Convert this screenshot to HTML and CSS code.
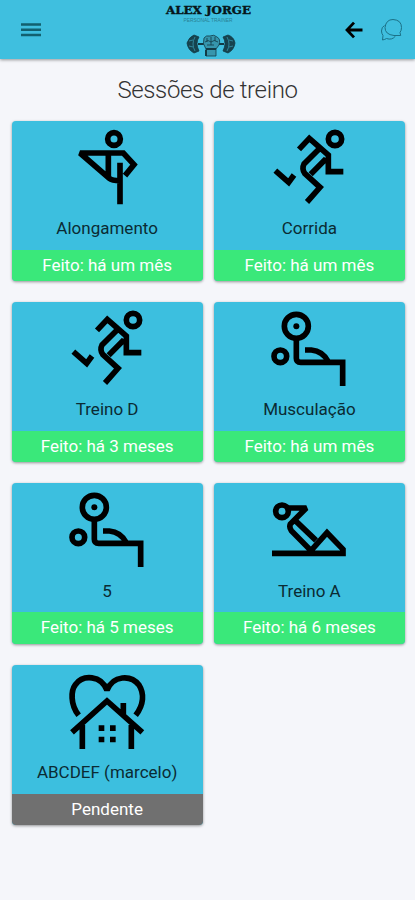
FILE: index.html
```
<!DOCTYPE html>
<html lang="pt-BR">
<head>
    <meta charset="UTF-8">
    <meta name="viewport" content="width=device-width, initial-scale=1.0">
    <title>Sessões de treino</title>
    <link rel="stylesheet" href="styles.css">
</head>
<body>
    <!-- icons used more than once -->
    <svg class="defs" width="0" height="0">
        <symbol id="run" viewBox="-3 3 300 285">
            <circle cx="225" cy="57" r="20"/>
            <path d="M117 88L148 55L205 105V155H250M178 86L132 132Q125 146 134 160L180 202L141 246M198 116L152 163M46 152L86 187L102 165"/>
        </symbol>
        <symbol id="bench" viewBox="-3 -7 300 285">
            <circle cx="109" cy="66" r="36"/>
            <circle class="solid" cx="109" cy="66" r="9"/>
            <circle cx="61" cy="156" r="19"/>
            <path d="M109 102V162Q109 174 122 174H248V245M135 137H154Q188 140 204 171"/>
        </symbol>
    </svg>

    <header>
        <svg class="menu" width="20" height="16" viewBox="0 0 20 16">
            <path d="M0 2.500H20M0 7.700H20M0 13H20"/>
        </svg>
        <svg class="logo" width="92" height="58" viewBox="0 0 92 58">
            <text class="brand" x="4" y="12.500" textLength="85" lengthAdjust="spacingAndGlyphs">ALEX JORGE</text>
            <text class="tagline" x="21.500" y="20.500" textLength="49" lengthAdjust="spacingAndGlyphs">PERSONAL TRAINER</text>
            <g class="dumbbell">
                <path class="plate" d="M32 34Q27 36 25 42Q26 49 32 52L37 50Q33 42 37 36ZM66 34Q72 36 73 42Q72 49 66 52L61 50Q65 42 61 36Z"/>
                <path class="shine" d="M33 36Q29 43 33 50M65 36Q69 43 65 50M27 40L31 39M27 45L31 46M71 40L67 39M71 45L67 46"/>
                <path class="bar" d="M36 43H42M57 43H62"/>
                <path class="hand" d="M42 37Q44 34 48 35Q52 33 55 36Q59 38 57 44L54 48V55H44V48Q40 43 42 37Z"/>
                <path d="M43 41Q46 38 49 41Q52 38 56 41M45 37V41M49 36V44M53 36V40M45 44H52"/>
                <path class="bar" d="M44 49V55M44 48H54"/>
            </g>
        </svg>
        <div class="actions">
            <svg class="back" width="18" height="18" viewBox="0 0 18 18">
                <path d="M9 1.600L2 9L9 16.400M2.500 9H17.500"/>
            </svg>
            <svg class="chat" width="23" height="24" viewBox="0 0 23 24">
                <path d="M20.700 17.500H14Q5 16.500 5 9.500Q6 1.500 13 1.500Q21.500 2 21.500 9.500Q21.500 12.500 20 14.500Z"/>
                <path d="M4.500 7.500Q1.500 9 1.500 13Q1.500 15.500 3 17.500L2.500 22Q5 21.500 6.500 20.500Q12 22.500 15.500 18"/>
            </svg>
        </div>
    </header>

    <h1>Sessões de treino</h1>

    <main class="grid">
        <div class="card">
            <svg class="icon" viewBox="-9 3 300 285">
                <circle cx="162" cy="57" r="19"/>
                <path d="M180 253V128M195 167L222 134L190 99H60L148 175Q156 182 180 182M145 100V170"/>
            </svg>
            <div class="name">Alongamento</div>
            <div class="status">Feito: há um mês</div>
        </div>
        <div class="card">
            <svg class="icon"><use href="#run"/></svg>
            <div class="name">Corrida</div>
            <div class="status">Feito: há um mês</div>
        </div>
        <div class="card">
            <svg class="icon"><use href="#run"/></svg>
            <div class="name">Treino D</div>
            <div class="status">Feito: há 3 meses</div>
        </div>
        <div class="card">
            <svg class="icon"><use href="#bench"/></svg>
            <div class="name">Musculação</div>
            <div class="status">Feito: há um mês</div>
        </div>
        <div class="card">
            <svg class="icon"><use href="#bench"/></svg>
            <div class="name">5</div>
            <div class="status">Feito: há 5 meses</div>
        </div>
        <div class="card">
            <svg class="icon" viewBox="-3 -18 300 285">
                <circle cx="66" cy="67" r="19"/>
                <path d="M83 57H139L91 105Q87 115 94 125L153 185L201 131L249 181V193H36M106 95L168 154"/>
            </svg>
            <div class="name">Treino A</div>
            <div class="status">Feito: há 6 meses</div>
        </div>
        <div class="card">
            <svg class="icon" viewBox="6 0 300 285">
                <path d="M71 151C45 118 48 76 61 59C84 28 139 30 156 76C174 30 228 29 252 60C268 85 267 119 242 151M51 202L156 108L262 202M82 180V252M229 180V252M205 147V114"/>
                <path class="solid" d="M131 181h17v17h-17zM165 181h17v17h-17zM131 215h17v17h-17zM165 215h17v17h-17z"/>
            </svg>
            <div class="name">ABCDEF (marcelo)</div>
            <div class="status pending">Pendente</div>
        </div>
    </main>
</body>
</html>
```
FILE: styles.css
```
* {
    box-sizing: border-box;
}
body {
    margin: 0;
    min-height: 100vh;
    background: #f5f6fa;
    font-family: Roboto, "Liberation Sans", sans-serif;
}
svg {
    display: block;
    fill: none;
    stroke: #000;
}
.defs {
    position: absolute;
}
header {
    display: grid;
    grid-template-columns: 1fr 92px 1fr;
    align-items: center;
    height: 59px;
    padding: 0 12px 0 21px;
    background: #3fbfdf;
    box-shadow: 0 1px 3px rgba(0,0,0,0.4);
}
.menu {
    stroke: #12606f;
    stroke-width: 2.6;
}
.logo {
    margin-left: -4px;
}
.logo text {
    stroke: none;
    fill: #06161a;
}
.logo .brand {
    font: bold 11.5px "DejaVu Serif", serif;
    stroke: #06161a;
    stroke-width: 0.4;
}
.logo .tagline {
    font: 4.5px "Liberation Sans", sans-serif;
    fill: #287f94;
}
.dumbbell {
    stroke: #123b46;
    stroke-width: 0.8;
}
.plate {
    fill: #16434f;
}
.shine {
    stroke: #3696ad;
}
.hand {
    fill: #3696ad;
}
.bar {
    stroke-width: 2;
}
.actions {
    display: flex;
    justify-content: flex-end;
    align-items: center;
    gap: 17px;
}
.back {
    stroke-width: 2.8;
}
.chat {
    stroke: #1b7187;
    stroke-width: 1;
}
h1 {
    margin: 16px 0 14.5px;
    font-size: 24px;
    font-weight: 300;
    line-height: 31px;
    letter-spacing: -0.37px;
    text-align: center;
    color: #333;
}
.grid {
    display: grid;
    grid-template-columns: 1fr 1fr;
    gap: 21px 11px;
    padding: 0 10px 0 11.5px;
}
.card {
    height: 160.4px;
    background: #3cbfdf;
    border-radius: 4px;
    overflow: hidden;
    text-align: center;
    box-shadow: 0 1px 3px rgba(0,0,0,0.4);
}
.icon {
    width: 100px;
    height: 95px;
    margin: 0 auto;
    stroke-width: 17;
    stroke-miterlimit: 2;
}
.name {
    height: 34px;
    padding-top: 2.5px;
    font-size: 17px;
    line-height: 20px;
    color: #0b2b33;
}
.solid {
    fill: #000;
    stroke: none;
}
.status {
    height: 31.4px;
    font-size: 17px;
    line-height: 31px;
    color: #fff;
    background: #3ae87a;
}
.pending {
    background: #707070;
}
```
